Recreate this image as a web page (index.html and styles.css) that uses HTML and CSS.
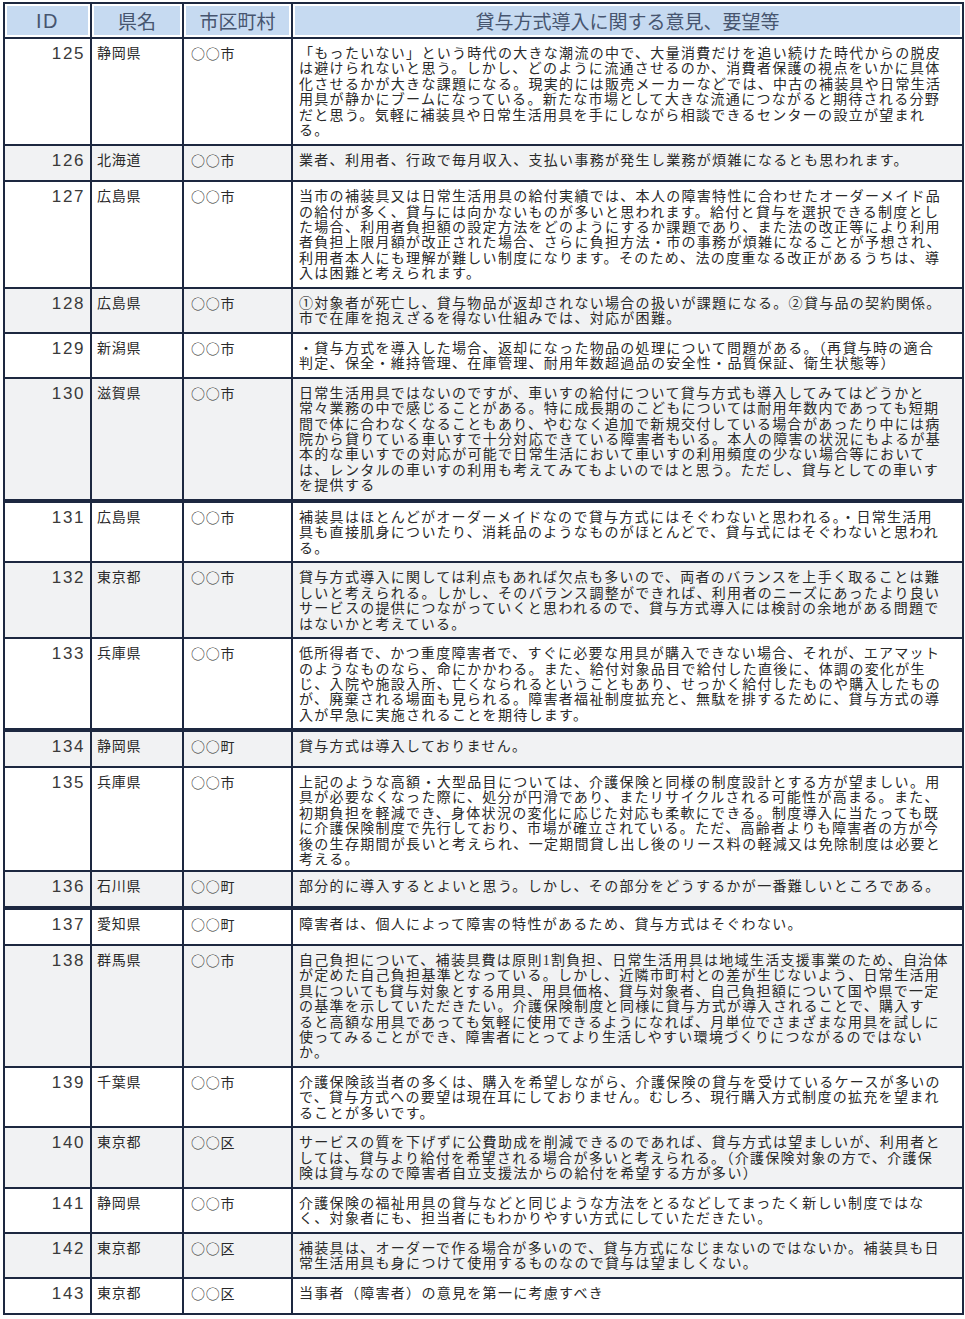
FILE: index.html
```html
<!DOCTYPE html>
<html lang="ja">
<head>
<meta charset="utf-8">
<title>貸与方式導入に関する意見、要望等</title>
<link rel="stylesheet" href="styles.css">
</head>
<body>
<table class="sheet">
  <colgroup>
    <col class="c-id"><col class="c-pref"><col class="c-city"><col class="c-text">
  </colgroup>
  <thead>
    <tr>
      <th class="h-id">ID</th>
      <th>県名</th>
      <th>市区町村</th>
      <th>貸与方式導入に関する意見、要望等</th>
    </tr>
  </thead>
  <tbody>
    <tr>
      <td class="id">125</td><td class="pref">静岡県</td><td class="city">○○市</td>
      <td class="txt">「もったいない」という時代の大きな潮流の中で、大量消費だけを追い続けた時代からの脱皮<br>は避けられないと思う。しかし、どのように流通させるのか、消費者保護の視点をいかに具体<br>化させるかが大きな課題になる。現実的には販売メーカーなどでは、中古の補装具や日常生活<br>用具が静かにブームになっている。新たな市場として大きな流通につながると期待される分野<br>だと思う。気軽に補装具や日常生活用具を手にしながら相談できるセンターの設立が望まれ<br>る。</td>
    </tr>
    <tr class="alt one">
      <td class="id">126</td><td class="pref">北海道</td><td class="city">○○市</td>
      <td class="txt">業者、利用者、行政で毎月収入、支払い事務が発生し業務が煩雑になるとも思われます。</td>
    </tr>
    <tr>
      <td class="id">127</td><td class="pref">広島県</td><td class="city">○○市</td>
      <td class="txt">当市の補装具又は日常生活用具の給付実績では、本人の障害特性に合わせたオーダーメイド品<br>の給付が多く、貸与には向かないものが多いと思われます。給付と貸与を選択できる制度とし<br>た場合、利用者負担額の設定方法をどのようにするか課題であり、また法の改正等により利用<br>者負担上限月額が改正された場合、さらに負担方法・市の事務が煩雑になることが予想され、<br>利用者本人にも理解が難しい制度になります。そのため、法の度重なる改正があるうちは、導<br>入は困難と考えられます。</td>
    </tr>
    <tr class="alt">
      <td class="id">128</td><td class="pref">広島県</td><td class="city">○○市</td>
      <td class="txt">①対象者が死亡し、貸与物品が返却されない場合の扱いが課題になる。②貸与品の契約関係。<br>市で在庫を抱えざるを得ない仕組みでは、対応が困難。</td>
    </tr>
    <tr>
      <td class="id">129</td><td class="pref">新潟県</td><td class="city">○○市</td>
      <td class="txt">・貸与方式を導入した場合、返却になった物品の処理について問題がある。（再貸与時の適合<br>判定、保全・維持管理、在庫管理、耐用年数超過品の安全性・品質保証、衛生状態等）</td>
    </tr>
    <tr class="alt">
      <td class="id">130</td><td class="pref">滋賀県</td><td class="city">○○市</td>
      <td class="txt">日常生活用具ではないのですが、車いすの給付について貸与方式も導入してみてはどうかと<br>常々業務の中で感じることがある。特に成長期のこどもについては耐用年数内であっても短期<br>間で体に合わなくなることもあり、やむなく追加で新規交付している場合があったり中には病<br>院から貸りている車いすで十分対応できている障害者もいる。本人の障害の状況にもよるが基<br>本的な車いすでの対応が可能で日常生活において車いすの利用頻度の少ない場合等において<br>は、レンタルの車いすの利用も考えてみてもよいのではと思う。ただし、貸与としての車いす<br>を提供する</td>
    </tr>
    <tr class="brk">
      <td class="id">131</td><td class="pref">広島県</td><td class="city">○○市</td>
      <td class="txt">補装具はほとんどがオーダーメイドなので貸与方式にはそぐわないと思われる。・日常生活用<br>具も直接肌身についたり、消耗品のようなものがほとんどで、貸与式にはそぐわないと思われ<br>る。</td>
    </tr>
    <tr class="alt">
      <td class="id">132</td><td class="pref">東京都</td><td class="city">○○市</td>
      <td class="txt">貸与方式導入に関しては利点もあれば欠点も多いので、両者のバランスを上手く取ることは難<br>しいと考えられる。しかし、そのバランス調整ができれば、利用者のニーズにあったより良い<br>サービスの提供につながっていくと思われるので、貸与方式導入には検討の余地がある問題で<br>はないかと考えている。</td>
    </tr>
    <tr>
      <td class="id">133</td><td class="pref">兵庫県</td><td class="city">○○市</td>
      <td class="txt">低所得者で、かつ重度障害者で、すぐに必要な用具が購入できない場合、それが、エアマット<br>のようなものなら、命にかかわる。また、給付対象品目で給付した直後に、体調の変化が生<br>じ、入院や施設入所、亡くなられるということもあり、せっかく給付したものや購入したもの<br>が、廃棄される場面も見られる。障害者福祉制度拡充と、無駄を排するために、貸与方式の導<br>入が早急に実施されることを期待します。</td>
    </tr>
    <tr class="alt one brk">
      <td class="id">134</td><td class="pref">静岡県</td><td class="city">○○町</td>
      <td class="txt">貸与方式は導入しておりません。</td>
    </tr>
    <tr class="snug">
      <td class="id">135</td><td class="pref">兵庫県</td><td class="city">○○市</td>
      <td class="txt">上記のような高額・大型品目については、介護保険と同様の制度設計とする方が望ましい。用<br>具が必要なくなった際に、処分が円滑であり、またリサイクルされる可能性が高まる。また、<br>初期負担を軽減でき、身体状況の変化に応じた対応も柔軟にできる。制度導入に当たっても既<br>に介護保険制度で先行しており、市場が確立されている。ただ、高齢者よりも障害者の方が今<br>後の生存期間が長いと考えられ、一定期間貸し出し後のリース料の軽減又は免除制度は必要と<br>考える。</td>
    </tr>
    <tr class="alt one">
      <td class="id">136</td><td class="pref">石川県</td><td class="city">○○町</td>
      <td class="txt">部分的に導入するとよいと思う。しかし、その部分をどうするかが一番難しいところである。</td>
    </tr>
    <tr class="one brk">
      <td class="id">137</td><td class="pref">愛知県</td><td class="city">○○町</td>
      <td class="txt">障害者は、個人によって障害の特性があるため、貸与方式はそぐわない。</td>
    </tr>
    <tr class="alt">
      <td class="id">138</td><td class="pref">群馬県</td><td class="city">○○市</td>
      <td class="txt">自己負担について、補装具費は原則1割負担、日常生活用具は地域生活支援事業のため、自治体<br>が定めた自己負担基準となっている。しかし、近隣市町村との差が生じないよう、日常生活用<br>具についても貸与対象とする用具、用具価格、貸与対象者、自己負担額について国や県で一定<br>の基準を示していただきたい。介護保険制度と同様に貸与方式が導入されることで、購入す<br>ると高額な用具であっても気軽に使用できるようになれば、月単位でさまざまな用具を試しに<br>使ってみることができ、障害者にとってより生活しやすい環境づくりにつながるのではない<br>か。</td>
    </tr>
    <tr>
      <td class="id">139</td><td class="pref">千葉県</td><td class="city">○○市</td>
      <td class="txt">介護保険該当者の多くは、購入を希望しながら、介護保険の貸与を受けているケースが多いの<br>で、貸与方式への要望は現在耳にしておりません。むしろ、現行購入方式制度の拡充を望まれ<br>ることが多いです。</td>
    </tr>
    <tr class="alt">
      <td class="id">140</td><td class="pref">東京都</td><td class="city">○○区</td>
      <td class="txt">サービスの質を下げずに公費助成を削減できるのであれば、貸与方式は望ましいが、利用者と<br>しては、貸与より給付を希望される場合が多いと考えられる。（介護保険対象の方で、介護保<br>険は貸与なので障害者自立支援法からの給付を希望する方が多い）</td>
    </tr>
    <tr>
      <td class="id">141</td><td class="pref">静岡県</td><td class="city">○○市</td>
      <td class="txt">介護保険の福祉用具の貸与などと同じような方法をとるなどしてまったく新しい制度ではな<br>く、対象者にも、担当者にもわかりやすい方式にしていただきたい。</td>
    </tr>
    <tr class="alt">
      <td class="id">142</td><td class="pref">東京都</td><td class="city">○○区</td>
      <td class="txt">補装具は、オーダーで作る場合が多いので、貸与方式になじまないのではないか。補装具も日<br>常生活用具も身につけて使用するものなので貸与は望ましくない。</td>
    </tr>
    <tr class="one">
      <td class="id">143</td><td class="pref">東京都</td><td class="city">○○区</td>
      <td class="txt">当事者（障害者）の意見を第一に考慮すべき</td>
    </tr>
  </tbody>
</table>
</body>
</html>
```

FILE: styles.css
```css
html, body {
  margin: 0;
  padding: 0;
  background: #ffffff;
}

body {
  padding: 2px 3px 0 3px;
  font-family: "Noto Sans CJK JP", "Liberation Sans", sans-serif;
  color: #2a2a2a;
}

.sheet {
  width: 959px;
  border-collapse: collapse;
  table-layout: fixed;
  border: 2px solid #1d2840;
}

.c-id { width: 87px; }
.c-pref { width: 92px; }
.c-city { width: 109px; }
.c-text { width: 671px; }

.sheet th {
  background: #c6daf1;
  color: #46556f;
  font-weight: normal;
  font-size: 19px;
  line-height: 24px;
  height: 33px;
  padding: 0;
  text-align: center;
  border: 2px solid #1d2840;
  box-shadow: inset 0 0 0 2px #ffffff;
}

.sheet th.h-id {
  font-family: "Liberation Sans", "Noto Sans CJK JP", sans-serif;
  font-size: 20px;
  letter-spacing: 1.5px;
}

.sheet td {
  border: 2px solid #1d2840;
  vertical-align: top;
  padding: 7px 6px 5.2px 5px;
  background: #ffffff;
  white-space: nowrap;
}

.sheet tr.alt td {
  background: #f1f2f3;
}

.sheet tr.one td {
  padding-bottom: 12.2px;
}

.sheet tr.snug td {
  padding-bottom: 2.5px;
}

.sheet tr.brk td {
  border-top-width: 4px;
}

.sheet tr.one.brk td {
  padding-bottom: 11.2px;
}

.sheet td.txt {
  font-family: "Liberation Serif", "Noto Sans CJK JP", serif;
  font-size: 14px;
  line-height: 15.4px;
  letter-spacing: 1.3px;
  padding-left: 6px;
}

.sheet td.pref {
  font-family: "Liberation Serif", "Noto Sans CJK JP", serif;
  font-size: 14px;
  line-height: 15.4px;
  letter-spacing: 0.8px;
}

.sheet td.city {
  font-family: "Noto Sans CJK JP", sans-serif;
  font-size: 14px;
  line-height: 15.4px;
  letter-spacing: 0.8px;
  padding-left: 7px;
}

.sheet td.id {
  font-family: "Liberation Sans", "DejaVu Sans", sans-serif;
  font-size: 17px;
  line-height: 15.4px;
  text-align: right;
  padding-right: 5px;
  color: #3a3a3a;
  letter-spacing: 1.6px;
}
```
